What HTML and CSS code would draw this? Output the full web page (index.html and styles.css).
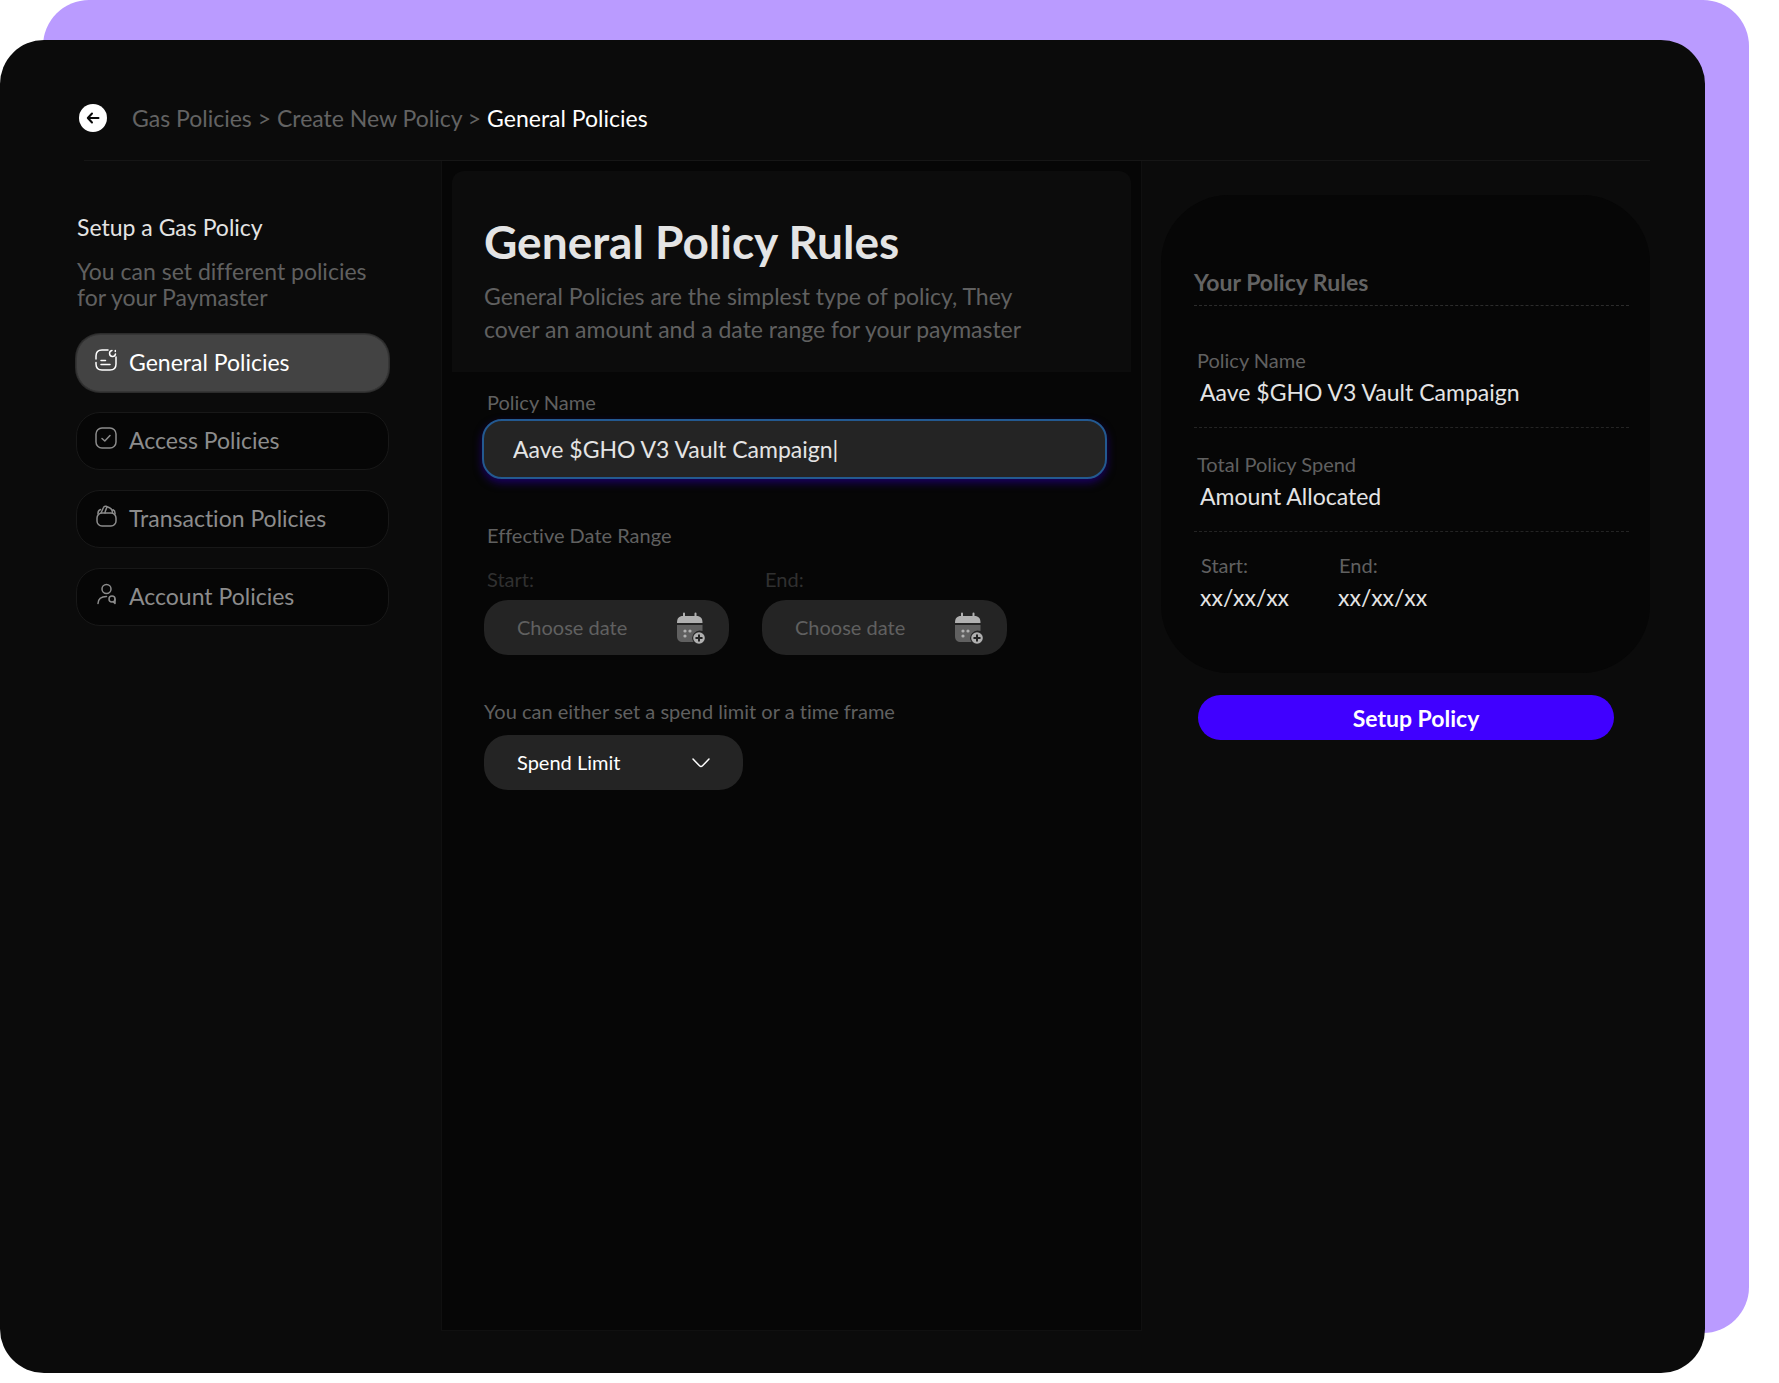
FILE: index.html
```html
<!DOCTYPE html>
<html lang="en">
<head>
    <meta charset="UTF-8">
    <meta name="viewport" content="width=device-width, initial-scale=1.0">
    <title>General Policies</title>
    <link rel="stylesheet" href="styles.css">
</head>
<body>
    <div class="stage">
        <div class="window">

            <header class="topbar">
                <button type="button" class="back" aria-label="Back">
                    <svg width="28" height="28" viewBox="0 0 28 28" fill="none" stroke="#0a0a0a" stroke-width="2" stroke-linecap="round" stroke-linejoin="round">
                        <path d="M19.500 14H9M13 9.500L8.800 14L13 18.500"/>
                    </svg>
                </button>
                <nav class="breadcrumb">
                    <a href="#">Gas Policies</a> &gt;
                    <a href="#">Create New Policy</a> &gt;
                    <a href="#" class="current">General Policies</a>
                </nav>
            </header>

            <div class="columns">
                <aside class="sidebar">
                    <h2>Setup a Gas Policy</h2>
                    <p>You can set different policies for your Paymaster</p>
                    <nav class="menu">
                        <a href="#" class="menu-item active">
                            <svg width="22" height="22" viewBox="0 0 22 22">
                                <path d="M1 10V7C1 3 3 1 7 1H13M21 8V15C21 19 19 21 15 21H7C3 21 1 19 1 15V13.500M6 11.500H10.500M6 15.500H15"/>
                                <path d="M17 1.500A3 3 0 1 0 20.500 5M20.300 1.400V2.400"/>
                            </svg>
                            General Policies
                        </a>
                        <a href="#" class="menu-item">
                            <svg width="22" height="22" viewBox="0 0 22 22">
                                <rect x="1" y="1" width="20" height="20" rx="6"/>
                                <path d="M7 11.500L9.800 14L15 8.500"/>
                            </svg>
                            Access Policies
                        </a>
                        <a href="#" class="menu-item">
                            <svg width="22" height="22" viewBox="0 0 22 22">
                                <rect x="2" y="8" width="19" height="13" rx="5"/>
                                <path d="M3 9C2.800 7 3.500 5.500 5.500 4.500M20 9C20.200 7 19.500 5.500 18 4.800M6 8L8.500 2.500C9 1.300 10 1 11 1.300L14.500 2.700C16.500 3.500 17.500 5 17.500 8M10 8C10 6 11 4.500 12 2"/>
                            </svg>
                            Transaction Policies
                        </a>
                        <a href="#" class="menu-item">
                            <svg width="22" height="22" viewBox="0 0 22 22">
                                <circle cx="11.500" cy="6" r="4.500"/>
                                <path d="M3 20.500C3.200 16 6.500 13.500 11.500 13.500"/>
                                <circle cx="17" cy="16" r="3"/>
                                <path d="M20 16V20.500L18.300 18.700"/>
                            </svg>
                            Account Policies
                        </a>
                    </nav>
                </aside>

                <main class="editor">
                    <div class="intro">
                        <h1>General Policy Rules</h1>
                        <p>General Policies are the simplest type of policy, They cover an amount and a date range for your paymaster</p>
                    </div>
                    <form class="policy-form" id="policyForm">
                        <div class="field">
                            <label for="policyName">Policy Name</label>
                            <input type="text" id="policyName" class="name-input" value="Aave $GHO V3 Vault Campaign|">
                        </div>

                        <fieldset class="dates">
                            <legend>Effective Date Range</legend>
                            <div class="date-row">
                                <div class="date-field">
                                    <label for="startDate">Start:</label>
                                    <div class="date-box">
                                        <input type="text" id="startDate" placeholder="Choose date">
                                        <svg width="28" height="32" viewBox="0 0 28 32">
                                            <path fill="#606060" d="M0 13H25.500V19A7.500 7.500 0 0 0 16.500 30H6C2 30 0 28 0 24Z"/>
                                            <path fill="#b0b0b0" d="M0 11C0 6 2 4 6 4V1.500A1 1 0 0 1 8 1.500V4H17.500V1.500A1 1 0 0 1 19.500 1.500V4C23.500 4 25.500 6 25.500 11Z"/>
                                            <g fill="#b0b0b0"><circle cx="8" cy="19" r="1.600"/><circle cx="13" cy="19" r="1.600"/><circle cx="8" cy="24" r="1.600"/></g>
                                            <circle cx="22" cy="26" r="5.800" fill="#b0b0b0"/>
                                            <path stroke="#242424" stroke-width="2" stroke-linecap="round" d="M22 23.200V28.800M19.200 26H24.800"/>
                                        </svg>
                                    </div>
                                </div>
                                <div class="date-field">
                                    <label for="endDate">End:</label>
                                    <div class="date-box">
                                        <input type="text" id="endDate" placeholder="Choose date">
                                        <svg width="28" height="32" viewBox="0 0 28 32">
                                            <path fill="#606060" d="M0 13H25.500V19A7.500 7.500 0 0 0 16.500 30H6C2 30 0 28 0 24Z"/>
                                            <path fill="#b0b0b0" d="M0 11C0 6 2 4 6 4V1.500A1 1 0 0 1 8 1.500V4H17.500V1.500A1 1 0 0 1 19.500 1.500V4C23.500 4 25.500 6 25.500 11Z"/>
                                            <g fill="#b0b0b0"><circle cx="8" cy="19" r="1.600"/><circle cx="13" cy="19" r="1.600"/><circle cx="8" cy="24" r="1.600"/></g>
                                            <circle cx="22" cy="26" r="5.800" fill="#b0b0b0"/>
                                            <path stroke="#242424" stroke-width="2" stroke-linecap="round" d="M22 23.200V28.800M19.200 26H24.800"/>
                                        </svg>
                                    </div>
                                </div>
                            </div>
                        </fieldset>

                        <div class="limit">
                            <label for="limitType">You can either set a spend limit or a time frame</label>
                            <div class="select-box">
                                <select id="limitType">
                                    <option>Spend Limit</option>
                                    <option>Time Frame</option>
                                </select>
                                <svg class="chevron" width="18" height="10" viewBox="0 0 18 10" fill="none" stroke="#ffffff" stroke-width="1.500" stroke-linecap="round" stroke-linejoin="round">
                                    <path d="M1 1L7.500 7.800Q9 9.200 10.500 7.800L17 1"/>
                                </svg>
                            </div>
                        </div>
                    </form>
                </main>

                <aside class="summary">
                    <section class="rules">
                        <h2>Your Policy Rules</h2>
                        <dl class="rule first">
                            <dt>Policy Name</dt>
                            <dd>Aave $GHO V3 Vault Campaign</dd>
                        </dl>
                        <dl class="rule">
                            <dt>Total Policy Spend</dt>
                            <dd>Amount Allocated</dd>
                        </dl>
                        <div class="rule-dates">
                            <dl>
                                <dt>Start:</dt>
                                <dd>xx/xx/xx</dd>
                            </dl>
                            <dl>
                                <dt>End:</dt>
                                <dd>xx/xx/xx</dd>
                            </dl>
                        </div>
                    </section>
                    <button type="submit" form="policyForm" class="setup">Setup Policy</button>
                </aside>
            </div>

        </div>
    </div>
</body>
</html>
```
FILE: styles.css
```css
* {
    box-sizing: border-box;
}

body {
    margin: 0;
    background: #ffffff;
    color: #e4e4e4;
    font-family: Lato, "Liberation Sans", sans-serif;
    font-size: 23px;
    font-variant-ligatures: none;
}

h1, h2, p, dl, dd, fieldset {
    margin: 0;
    padding: 0;
}

a {
    color: inherit;
    text-decoration: none;
}

input, select, button {
    font-family: inherit;
    border: none;
    outline: none;
}

.stage {
    position: relative;
    display: flex;
    min-height: 100vh;
    padding: 40px 74px 10px 0;
}

/* Purple sheet behind the window */
.stage::before {
    content: "";
    position: absolute;
    top: 0;
    right: 30px;
    bottom: 50px;
    left: 43px;
    border-radius: 46px;
    background: #ba9bff;
}

.window {
    position: relative;
    flex: 1;
    display: flex;
    flex-direction: column;
    padding: 0 55px 42px 76px;
    border-radius: 44px;
    background: #0b0b0b;
}

.topbar {
    display: flex;
    align-items: center;
    gap: 25px;
    height: 121px;
    margin-left: 8px;
    padding: 36px 0 0;
    border-bottom: 1px solid #161616;
}

.back {
    display: flex;
    margin-left: -5px;
    padding: 0;
    border-radius: 50%;
    background: #ffffff;
    cursor: pointer;
}

.breadcrumb {
    color: #636363;
}

.breadcrumb .current {
    color: #ffffff;
}

.columns {
    flex: 1;
    display: flex;
}

.sidebar {
    width: 365px;
    padding: 52px 52px 0 0;
}

.sidebar h2 {
    padding-left: 1px;
    font-size: 23px;
    font-weight: normal;
    line-height: 28px;
}

.sidebar p {
    padding: 17px 16px 0 1px;
    color: #606060;
    line-height: 26px;
}

.menu {
    display: flex;
    flex-direction: column;
    gap: 20px;
    margin-top: 24px;
}

.menu-item {
    display: flex;
    align-items: center;
    gap: 12px;
    height: 58px;
    padding: 0 0 2px 18px;
    border: 1px solid #181818;
    border-radius: 24px;
    background: #060606;
    color: #8c8c8c;
}

.menu-item svg {
    margin-bottom: 4px;
    fill: none;
    stroke: currentColor;
    stroke-width: 1.500;
    stroke-linecap: round;
    stroke-linejoin: round;
}

.menu-item.active {
    border-color: #363636;
    box-shadow: 0 0 0 1px #2c2c2c;
    background: #434343;
    color: #ffffff;
}

.editor {
    flex: 1;
    padding: 10px;
    border: 1px solid #101010;
    border-top: none;
    background: #060606;
}

.intro {
    padding: 44px 100px 26px 32px;
    border-radius: 12px 12px 0 0;
    background: #0c0c0c;
}

.intro h1 {
    font-size: 46px;
    line-height: 54px;
}

.intro p {
    padding-top: 11px;
    color: #606060;
    line-height: 33px;
}

.policy-form {
    padding: 18px 24px 0 32px;
    font-size: 20px;
    line-height: 24px;
    color: #606060;
}

.policy-form label {
    display: block;
}

.field label {
    padding-left: 3px;
}

.name-input {
    width: calc(100% + 2px);
    height: 60px;
    margin: 5px 0 0 -2px;
    padding: 0 29px;
    border: 2px solid #235990;
    border-radius: 20px;
    box-shadow: 0 4px 8px #1a0060;
    background: #242424;
    color: #e4e4e4;
    font-size: 23px;
}

.dates {
    margin-top: 44px;
    border: none;
}

.dates legend {
    padding: 0 0 0 3px;
}

.date-row {
    display: flex;
    gap: 33px;
    padding-top: 20px;
}

.date-field {
    width: 245px;
}

.date-field label {
    padding-left: 3px;
    color: #303030;
}

.date-box {
    display: flex;
    align-items: center;
    height: 55px;
    margin-top: 9px;
    padding: 0 24px 0 33px;
    border-radius: 24px;
    background: #242424;
}

.date-box input {
    flex: 1;
    min-width: 0;
    padding: 0 0 2px;
    background: transparent;
    color: #e4e4e4;
    font-size: 20px;
}

.date-box input::placeholder {
    color: #606060;
    opacity: 1;
}

.limit {
    margin-top: 44px;
}

.select-box {
    position: relative;
    width: 259px;
    margin-top: 12px;
}

.select-box select {
    width: 100%;
    height: 55px;
    padding: 0 33px 2px;
    border-radius: 24px;
    background: #242424;
    color: #ffffff;
    font-size: 20px;
    appearance: none;
}

.chevron {
    position: absolute;
    top: 23px;
    right: 33px;
    pointer-events: none;
}

.summary {
    width: 508px;
    padding: 34px 0 0 19px;
}

.rules {
    padding: 72px 21px 61px 33px;
    border-radius: 68px;
    background: #060606;
}

.rules h2 {
    padding-bottom: 8px;
    border-bottom: 1px dashed #2c2c2c;
    color: #636363;
    font-size: 23px;
    line-height: 30px;
}

.rules dt {
    color: #606060;
    font-size: 20px;
    line-height: 24px;
}

.rules dd {
    padding-left: 3px;
    line-height: 30px;
    margin-top: 5px;
}

.rule {
    padding: 24px 3px 20px;
    border-bottom: 1px dashed #242424;
}

.rule.first {
    padding-top: 42px;
}

.rule-dates {
    display: flex;
    gap: 46px;
    padding: 21px 3px 0;
}

.rule-dates dt {
    padding-left: 4px;
}

.setup {
    display: block;
    width: 416px;
    height: 45px;
    margin: 22px 0 0 37px;
    padding: 0 0 0 20px;
    border-radius: 23px;
    background: #4000ff;
    color: #ffffff;
    font-size: 23px;
    font-weight: bold;
    cursor: pointer;
}
```
